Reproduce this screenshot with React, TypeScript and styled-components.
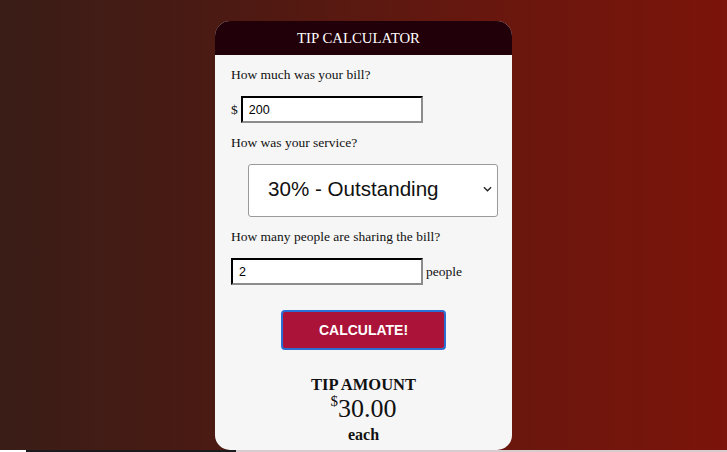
import React from 'react';
import styled, { createGlobalStyle } from 'styled-components';

const GlobalStyle = createGlobalStyle`
  html, body {
    margin: 0;
    padding: 0;
    background: #d9ccd0;
  }
  body {
    font-family: 'Liberation Serif', 'Times New Roman', serif;
  }
`;

export default function App() {
  return (
    <>
      <GlobalStyle />
      <Page>
        <Card>
          <Header>TIP CALCULATOR</Header>
          <Body>
            <Label>How much was your bill?</Label>
            <Row>
              <Unit>$</Unit>
              <TextInput $width={182} defaultValue="200" />
            </Row>
            <Label>How was your service?</Label>
            <SelectWrap>
              <Select defaultValue="0.3">
                <option value="0.3">30% - Outstanding</option>
                <option value="0.2">20% - Good</option>
                <option value="0.15">15% - It was OK</option>
                <option value="0.1">10% - Bad</option>
                <option value="0.05">5% - Terrible</option>
              </Select>
              <Chevron viewBox="0 0 10 6" width="9" height="6">
                <path d="M1 1l4 4 4-4" fill="none" stroke="#222" strokeWidth="1.5" />
              </Chevron>
            </SelectWrap>
            <Label>How many people are sharing the bill?</Label>
            <Row>
              <TextInput $width={192} defaultValue="2" />
              <Unit>people</Unit>
            </Row>
            <CalcButton>CALCULATE!</CalcButton>
            <Result>
              <ResultTitle>TIP AMOUNT</ResultTitle>
              <Amount>
                <sup>$</sup>30.00
              </Amount>
              <Each>each</Each>
            </Result>
          </Body>
        </Card>
      </Page>
      <Strip>
        <StripPart $w={26} $c="#ffffff" />
        <StripPart $w={210} $c="#1b1b1d" />
        <StripPart $w={491} $c="#d9ccd0" />
      </Strip>
    </>
  );
}

const Page = styled.div`
  height: 450px;
  padding-top: 21px;
  box-sizing: border-box;
  background: linear-gradient(to right, #3a1d17 0%, #4b1a13 30%, #6a170e 70%, #7b140a 100%);
  display: flex;
  justify-content: center;
  align-items: flex-start;
`;

const Card = styled.div`
  width: 297px;
  height: 429px;
  background: #f6f6f6;
  border-radius: 15px;
  overflow: hidden;
  display: flex;
  flex-direction: column;
`;

const Header = styled.div`
  height: 34px;
  line-height: 34px;
  padding-right: 10px;
  background: #22000a;
  color: #ffffff;
  text-align: center;
  font-size: 14.8px;
`;

const Body = styled.div`
  padding: 0 16px;
  display: flex;
  flex-direction: column;
  color: #111;
`;

const Label = styled.div`
  margin-top: 11px;
  font-size: 13.5px;
  line-height: 18px;
`;

const Row = styled.div`
  margin-top: 12px;
  display: flex;
  align-items: center;
  gap: 3px;
`;

const Unit = styled.span`
  font-size: 13.5px;
`;

const TextInput = styled.input<{ $width: number }>`
  width: ${(p) => p.$width}px;
  height: 27px;
  box-sizing: border-box;
  border: 2px inset #8c8c8c;
  border-top-color: #4e4e4e;
  border-left-color: #4e4e4e;
  background: #fff;
  padding: 0 6px;
  font-family: 'Liberation Sans', Arial, sans-serif;
  font-size: 12.5px;
  color: #000;
  outline: none;
`;

const SelectWrap = styled.div`
  position: relative;
  margin: 12px 0 0 17px;
  width: 250px;
`;

const Select = styled.select`
  appearance: none;
  width: 250px;
  height: 53px;
  box-sizing: border-box;
  border: 1px solid #9a9a9a;
  border-radius: 3px;
  background: #fff;
  padding: 0 0 4px 19px;
  font-family: 'Liberation Sans', Arial, sans-serif;
  font-size: 20.6px;
  color: #111;
`;

const Chevron = styled.svg`
  position: absolute;
  right: 6px;
  top: 22px;
  pointer-events: none;
`;

const CalcButton = styled.button`
  align-self: center;
  margin-top: 25px;
  width: 165px;
  height: 40px;
  background: #ab1438;
  color: #fff;
  border: 2px solid #2c6fd4;
  border-radius: 4px;
  font-family: 'Liberation Sans', Arial, sans-serif;
  font-weight: 700;
  font-size: 14px;
`;

const Result = styled.div`
  margin-top: 25px;
  display: flex;
  flex-direction: column;
  align-items: center;
`;

const ResultTitle = styled.div`
  font-weight: 700;
  font-size: 16.5px;
  line-height: 20px;
`;

const Amount = styled.div`
  font-size: 26px;
  line-height: 26px;
  margin-top: 1px;

  sup {
    font-size: 15px;
    line-height: 0;
    vertical-align: baseline;
    position: relative;
    top: -11px;
  }
`;

const Each = styled.div`
  font-weight: 700;
  font-size: 16px;
  line-height: 20px;
  margin-top: 3px;
`;

const Strip = styled.div`
  display: flex;
  height: 2px;
`;

const StripPart = styled.div<{ $w: number; $c: string }>`
  width: ${(p) => p.$w}px;
  background: ${(p) => p.$c};
`;
